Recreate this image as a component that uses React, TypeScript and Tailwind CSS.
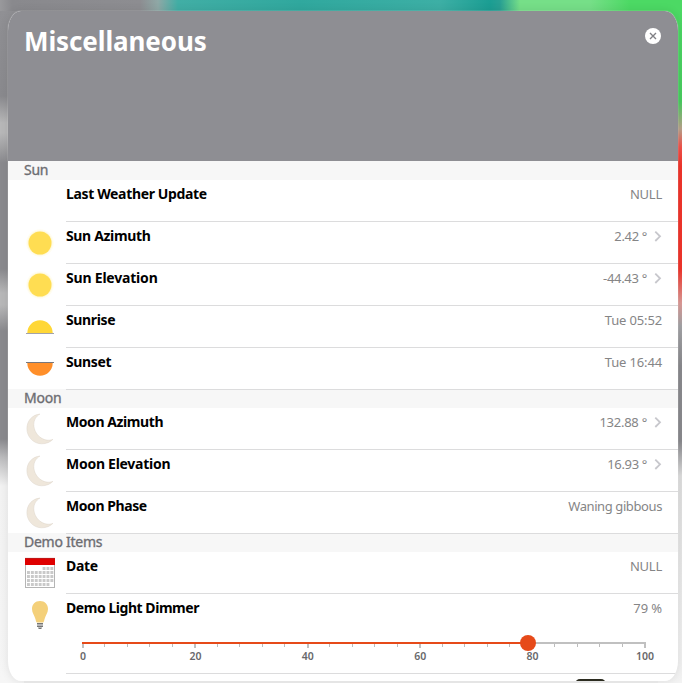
import type { ReactNode } from 'react';

function SunIcon() {
  return (
    <svg width="32" height="32" viewBox="0 0 32 32">
      <circle cx="16" cy="16" r="13.8" fill="#fffdf2" />
      <circle cx="16" cy="16" r="12.5" fill="#fff8d8" />
      <circle cx="16" cy="16" r="11.5" fill="#ffdd52" />
    </svg>
  );
}

function SunriseIcon() {
  return (
    <svg width="32" height="32" viewBox="0 0 32 32">
      <path d="M3.3 22a12.7 12.7 0 0 1 25.4 0z" fill="#ffd736" />
      <path d="M2 22.5H30" stroke="#a3a3a8" strokeWidth="1" />
    </svg>
  );
}

function SunsetIcon() {
  return (
    <svg width="32" height="32" viewBox="0 0 32 32">
      <path d="M3.3 10a12.7 12.7 0 0 0 25.4 0z" fill="#ff8f2a" />
      <path d="M2 9.5H30" stroke="#77777c" strokeWidth="1" />
    </svg>
  );
}

function MoonIcon() {
  return (
    <svg width="32" height="32" viewBox="0 0 32 32">
      <path
        d="M15.9 1.1C8.6 1.6 2.9 7.6 2.9 15.6C2.9 24.2 9.8 30.8 17.6 30.8C22.2 30.8 26.3 29.2 28.9 26.4C19.5 29.9 9.8 21.5 9.8 11.6C9.8 7 12.2 3.2 15.9 1.1Z"
        fill="#efe7db"
        stroke="#dcd5ca"
        strokeWidth="0.5"
      />
    </svg>
  );
}

const calendarCells = [0, 1, 2, 3, 4].flatMap((row) =>
  [0, 1, 2, 3, 4, 5, 6]
    .filter((col) => !(row === 0 && col < 4) && !(row === 4 && col > 5))
    .map((col) => ({ x: 3 + col * 3.9, y: 10 + row * 4 })),
);

function CalendarIcon() {
  return (
    <svg width="32" height="32" viewBox="0 0 32 32">
      <rect x="1.5" y="1.5" width="29" height="29" fill="#fff" stroke="#b5b5b5" />
      <rect x="1" y="1" width="30" height="7" fill="#df0000" />
      <path d="M1 1.4H31" stroke="#b32020" strokeWidth="0.8" />
      {calendarCells.map((c) => (
        <rect key={`${c.x}-${c.y}`} x={c.x} y={c.y} width="2.9" height="3" fill="#c9c9c9" />
      ))}
    </svg>
  );
}

function BulbIcon() {
  return (
    <svg width="32" height="32" viewBox="0 0 32 32">
      <path
        d="M16 2C11.2 2 8 5.4 8 9.9C8 13.8 10.4 16.2 11.5 20.2C11.9 21.8 12.3 23.5 13 23.5H19C19.7 23.5 20.1 21.8 20.5 20.2C21.6 16.2 24 13.8 24 9.9C24 5.4 20.8 2 16 2Z"
        fill="#f4d07a"
      />
      <rect x="13" y="24" width="6" height="1" fill="#777" />
      <rect x="13" y="25" width="6" height="2" fill="#b5b5b5" />
      <rect x="13" y="27" width="6" height="1" fill="#777" />
      <path d="M14 28.5H18L17.3 30H14.7Z" fill="#777" />
    </svg>
  );
}

function Chevron() {
  return (
    <svg className="mt-[8px] ml-[7px]" width="8" height="13" viewBox="0 0 8 13" fill="none">
      <path d="M1.3 1.6L6 6.3L1.3 11" stroke="#c7c7cc" strokeWidth="1.8" />
    </svg>
  );
}

function Section({ title, className = '' }: { title: string; className?: string }) {
  return (
    <div
      className={`h-[19px] bg-[#f7f7f7] pl-4 text-[14px] leading-[18px] tracking-[-0.25px] text-[#6d6d72] [-webkit-text-stroke:0.35px_#6d6d72] ${className}`}
    >
      {title}
    </div>
  );
}

type RowProps = {
  icon?: ReactNode;
  label: string;
  tracking?: string;
  value: string;
  valueTracking?: string;
  link?: boolean;
  children?: ReactNode;
};

function Row({
  icon,
  label,
  tracking = 'tracking-[-0.35px]',
  value,
  valueTracking = 'tracking-[-0.25px]',
  link,
  children,
}: RowProps) {
  return (
    <div className="flex pl-4">
      <div className="h-8 w-8 shrink-0 pt-[5px]">{icon}</div>
      <div className="relative z-10 ml-[10px] min-w-0 flex-1 border-b border-[#dcdcdd]">
        <div className="flex h-[41px] justify-between pr-4">
          <div className={`pt-[4px] text-[14px] leading-[19px] font-bold whitespace-nowrap text-black ${tracking}`}>{label}</div>
          <div className="flex whitespace-nowrap text-[#858586]">
            <div className={`pt-[4px] text-[13px] leading-[20px] ${valueTracking}`}>{value}</div>
            {link && <Chevron />}
          </div>
        </div>
        {children}
      </div>
    </div>
  );
}

function Slider() {
  const ticks = Array.from({ length: 26 }, (_, i) => i);
  return (
    <svg className="block" width="612" height="38" viewBox="0 0 612 38">
      {ticks.map((i) => {
        const x = 17 + i * 22.48;
        return i % 5 === 0 ? (
          <rect key={i} x={Math.round(x) - 1} y="7" width="2" height="6" fill="#c0c0c0" />
        ) : (
          <rect key={i} x={Math.floor(x - 0.5)} y="8" width="1" height="4" fill="#bcbcbc" />
        );
      })}
      <rect x="16" y="7" width="563" height="2" fill="#c0c0c0" />
      <rect x="16" y="7" width="446" height="2" fill="#e64a19" />
      <circle cx="462" cy="8" r="8" fill="#e64a19" />
      {[0, 20, 40, 60, 80, 100].map((n) => (
        <text key={n} x={17 + n * 5.62} y="25" textAnchor="middle" fontSize="10.5" fontWeight="600" fill="#68686b">
          {n}
        </text>
      ))}
    </svg>
  );
}

export default function App() {
  return (
    <div className="relative h-[683px] w-[682px] overflow-hidden bg-[#eeeeee] font-['Noto_Sans','Open_Sans',sans-serif]">
      <div className="flex h-full flex-col">
        <div className="h-[11px] shrink-0 bg-[linear-gradient(90deg,#99999c_0px,#89898d_12px,#8d8d91_140px,#8fa8a6_158px,#41aea5_178px,#30a89e_300px,#3dafa5_440px,#1b9e93_490px,#28a093_500px,#76df88_520px,#76df88_590px,#4cd964_630px,#4cd964_682px)]" />
        <div className="flex flex-1 justify-between">
          <div className="w-6 bg-[linear-gradient(180deg,#909094_0px,#8a8a8e_85px,#b8b8b9_112px,#b8b8b9_122px,#8a8a8e_152px,#8a8a8e_258px,#b8b8b9_282px,#b8b8b9_294px,#8a8a8e_320px,#8a8a8e_428px,#bbbbbd_446px,#f3f3f3_475px,#f6f6f6_100%)]" />
          <div className="w-6 bg-[linear-gradient(180deg,#4cd964_0px,#48cc5f_90px,#b9a28b_118px,#f1534b_136px,#f0352b_155px,#f0352b_258px,#dc9a96_292px,#a3a3a6_315px,#89898d_355px,#89898d_430px,#dddddd_465px,#f3f3f3_100%)]" />
        </div>
      </div>
      <main className="absolute top-[11px] left-[8px] h-[670px] w-[670px] overflow-hidden rounded-[13px/20px] bg-white shadow-[0_0_10px_rgba(0,0,0,0.1),0_0_0_1px_rgba(255,255,255,0.12)]">
        <header className="flex h-[150px] items-start justify-between bg-[#8e8e93] pr-[17px] pl-4">
          <h1 className="pt-[12px] text-[26px] leading-[36px] font-bold tracking-[-0.1px] text-white">Miscellaneous</h1>
          <button aria-label="Close" className="mt-[17px]">
            <svg width="16" height="16" viewBox="0 0 16 16">
              <circle cx="8" cy="8" r="8" fill="#fff" />
              <path d="M5 5L11 11M11 5L5 11" stroke="#808085" strokeWidth="1.4" />
            </svg>
          </button>
        </header>
        <Section title="Sun" />
        <Row label="Last Weather Update" value="NULL" />
        <Row icon={<SunIcon />} label="Sun Azimuth" value="2.42 °" valueTracking="tracking-[-0.35px]" link />
        <Row icon={<SunIcon />} label="Sun Elevation" tracking="tracking-[-0.2px]" value="-44.43 °" valueTracking="tracking-[-0.3px]" link />
        <Row icon={<SunriseIcon />} label="Sunrise" value="Tue 05:52" valueTracking="tracking-[-0.15px]" />
        <Row icon={<SunsetIcon />} label="Sunset" value="Tue 16:44" valueTracking="tracking-[-0.15px]" />
        <Section title="Moon" className="-mt-px" />
        <Row icon={<MoonIcon />} label="Moon Azimuth" tracking="tracking-[-0.42px]" value="132.88 °" link />
        <Row icon={<MoonIcon />} label="Moon Elevation" tracking="tracking-[-0.27px]" value="16.93 °" valueTracking="tracking-[-0.35px]" link />
        <Row icon={<MoonIcon />} label="Moon Phase" tracking="tracking-[-0.42px]" value="Waning gibbous" valueTracking="tracking-[-0.4px]" />
        <Section title="Demo Items" className="-mt-px" />
        <Row icon={<CalendarIcon />} label="Date" value="NULL" />
        <Row icon={<BulbIcon />} label="Demo Light Dimmer" tracking="tracking-[-0.45px]" value="79 %" valueTracking="tracking-[-0.1px]">
          <Slider />
        </Row>
        <div className="flex justify-end pt-[5px] pr-[72px]">
          <div className="h-8 w-[31px] rounded-[5px] bg-[#2c2c20]" />
        </div>
      </main>
    </div>
  );
}
